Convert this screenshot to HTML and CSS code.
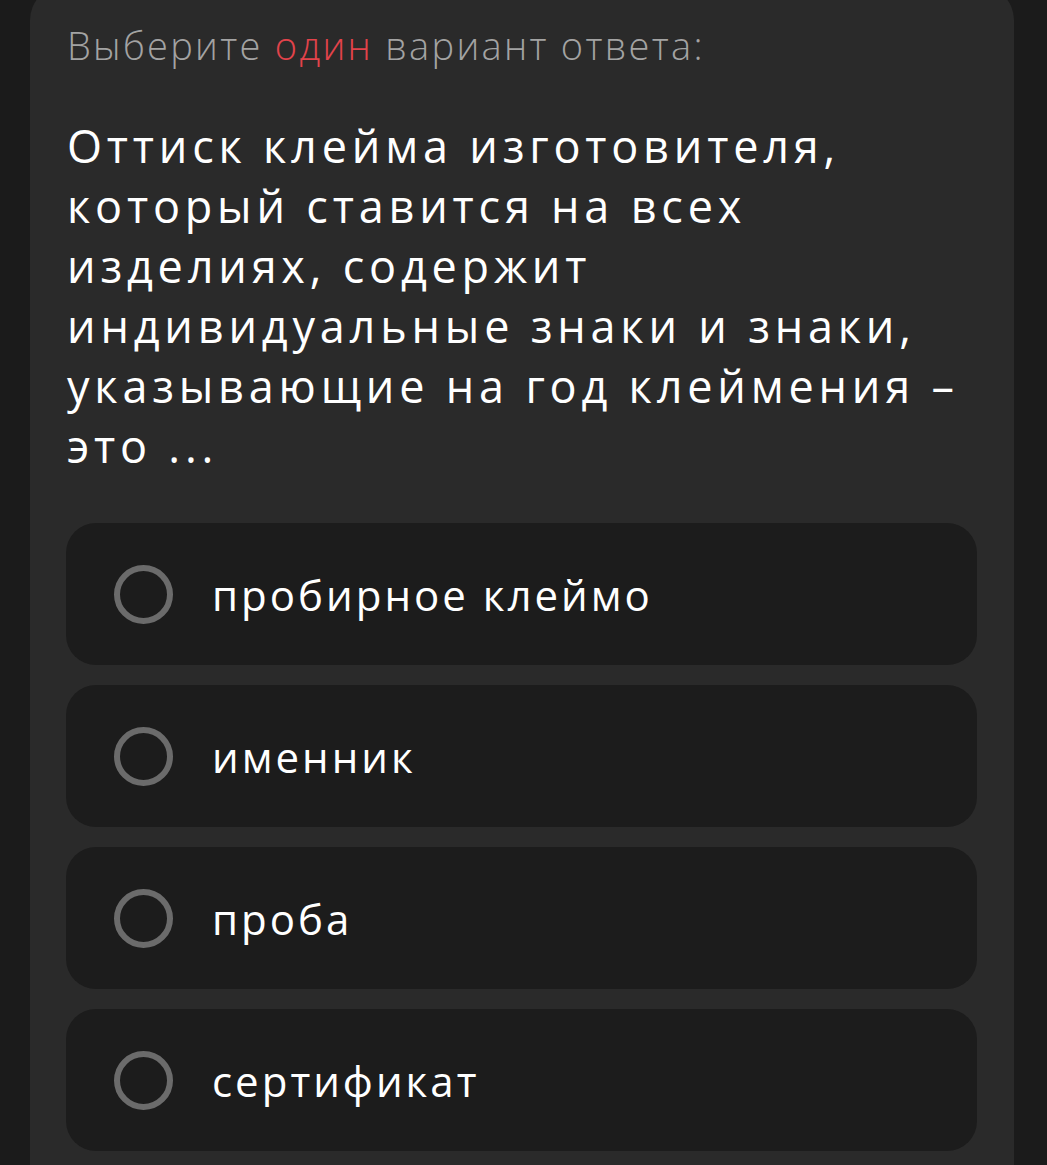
FILE: index.html
```html
<!DOCTYPE html>
<html lang="ru">

<head>
    <meta charset="UTF-8">
    <title>Тест</title>
    <link rel="stylesheet" href="styles.css">
</head>

<body>
    <div class="card">
        <p class="hint">Выберите <span class="red">один</span> вариант ответа:</p>
        <h2 class="question">Оттиск клейма изготовителя, который ставится на всех изделиях, содержит индивидуальные знаки и знаки, указывающие на год клеймения – это ...</h2>
        <ul class="options">
            <li class="opt"><span class="radio"></span>пробирное клеймо</li>
            <li class="opt"><span class="radio"></span>именник</li>
            <li class="opt"><span class="radio"></span>проба</li>
            <li class="opt"><span class="radio"></span>сертификат</li>
        </ul>
    </div>
</body>

</html>
```

FILE: styles.css
```css
* {
    margin: 0px;
    padding: 0px;
    box-sizing: border-box;
}

body {
    background-color: #1b1b1b;
    font-family: "Open Sans", "Liberation Sans", sans-serif;
    height: 1165px;
    overflow: hidden;
}

.card {
    width: 984px;
    height: 1179px;
    margin-left: 30px;
    margin-top: -14px;
    padding: 34px 37px 0px 36px;
    background-color: #2a2a2a;
    border-radius: 34px 34px 0 0;
}

.hint {
    color: #a3a3a3;
    font-size: 38px;
    font-weight: 300;
    line-height: 50px;
    letter-spacing: 2.3px;
    padding-left: 1px;
}

.red {
    color: #e2434b;
}

.question {
    color: #ffffff;
    font-size: 45px;
    font-weight: 500;
    line-height: 60px;
    letter-spacing: 4.8px;
    margin-top: 46px;
    padding-left: 1px;
}

.options {
    list-style-type: none;
    margin-top: 47px;
    display: flex;
    flex-direction: column;
    gap: 20px;
}

.opt {
    height: 142px;
    background-color: #1c1c1c;
    border-radius: 30px;
    display: flex;
    align-items: center;
    padding-left: 48px;
    color: #ffffff;
    font-size: 42px;
    font-weight: 400;
    letter-spacing: 3px;
}

.radio {
    width: 59px;
    height: 59px;
    border: 6px solid #6b6b6b;
    border-radius: 50%;
    margin-right: 39px;
    flex-shrink: 0;
}
```
